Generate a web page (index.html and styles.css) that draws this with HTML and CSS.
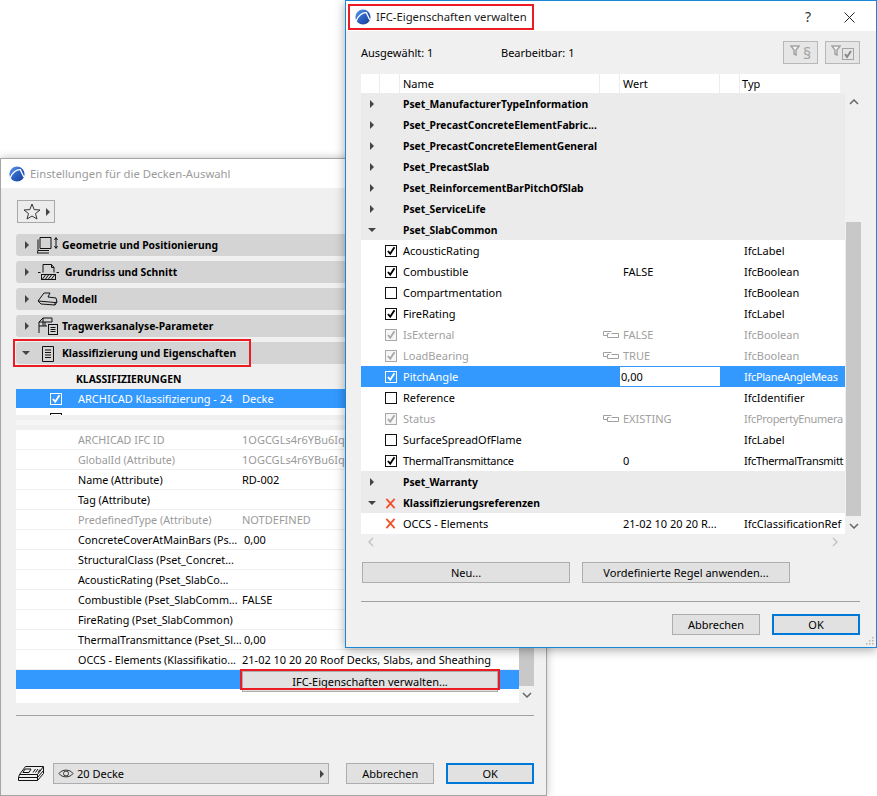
FILE: index.html
```html
<!DOCTYPE html>
<html lang="de">
<head>
<meta charset="utf-8">
<title>IFC-Eigenschaften verwalten</title>
<link rel="stylesheet" href="styles.css">
</head>
<body>
<svg class="defs" aria-hidden="true">
  <defs>
    <linearGradient id="logoFill" x1="0" y1="0" x2="1" y2="1">
      <stop offset="0" stop-color="#5f9bec"/>
      <stop offset="0.5" stop-color="#2c62c4"/>
      <stop offset="1" stop-color="#1b3c8e"/>
    </linearGradient>
  </defs>
  <symbol id="logo" viewBox="0 0 16 16">
    <circle cx="8" cy="8" r="7.6" fill="url(#logoFill)"/>
    <path d="M1.200 12C2.800 6.800 7.500 3.300 11.300 3.600L14.800 11" fill="none" stroke="#fff" stroke-width="1.300"/>
  </symbol>
  <symbol id="check" viewBox="0 0 13 13">
    <path d="M2.500 6.500L5.500 10L11 1.500" fill="none" stroke="currentColor" stroke-width="2.400"/>
  </symbol>
  <symbol id="link" viewBox="0 0 16 8">
    <path d="M8.500 0.500H0.500V4.500H4M4.500 2.500H6.500M4.500 2.500V6.500H15.500V2.500H8.500" fill="none" stroke="currentColor" stroke-width="1"/>
  </symbol>
  <symbol id="cross" viewBox="0 0 12 12">
    <path d="M1.500 1L10.500 11M10.500 1L1.500 11" fill="none" stroke="#f0512a" stroke-width="2"/>
  </symbol>
</svg>

<section class="win win-back">
  <header class="title title-back">
    <svg class="logo"><use href="#logo"/></svg>
    <span>Einstellungen für die Decken-Auswahl</span>
  </header>
  <div class="back-body">
    <button class="star-btn">
      <svg width="18" height="17" viewBox="0 0 18 17"><path d="M9 1L11.200 6.600L17 7L12.500 10.600L14 16L9 13L4 16L5.500 10.600L1 7L6.800 6.600Z" fill="none" stroke="#333" stroke-width="1"/></svg>
      <i class="tri tri-r"></i>
    </button>
    <div class="sections">
      <div class="sec"><i class="tri tri-r"></i>
        <svg class="sec-ico" width="24" height="18" viewBox="0 0 24 18"><path d="M3 1.500H14V12.500H3ZM1 3.500V14.500H12M1 14.500L0 17H12" fill="none" stroke="#111"/><path d="M19 2V12M17.500 4L19 1.500L20.500 4M17.500 10L19 12.500L20.500 10" fill="none" stroke="#111"/></svg>
        <b>Geometrie und Positionierung</b></div>
      <div class="sec"><i class="tri tri-r"></i>
        <svg class="sec-ico ico-wide" width="22" height="18" viewBox="0 0 22 18"><path d="M5 9.500V1.500H13.500L16 4.500V9.500M16 4.500H13.500V1.500M0 9.500H2.500M18.500 9.500H21" fill="none" stroke="#111"/><rect x="3.500" y="11.500" width="14" height="5" fill="none" stroke="#111"/><path d="M4.500 16L7.500 12M7.500 16L10.500 12M10.500 16L13.500 12M13.500 16L16.500 12" stroke="#111"/></svg>
        <b>Grundriss und Schnitt</b></div>
      <div class="sec"><i class="tri tri-r"></i>
        <svg class="sec-ico" width="24" height="18" viewBox="0 0 24 18"><path d="M1 11L7 3L13 3L11 7L19 8L20 12L18 15L4 14ZM1 11L18 12.500L18 15M20 12L18 12.500" fill="none" stroke="#111"/></svg>
        <b>Modell</b></div>
      <div class="sec"><i class="tri tri-r"></i>
        <svg class="sec-ico" width="24" height="18" viewBox="0 0 24 18"><path d="M2 16V5L6 1H15V5M2 5H15M6 1V9M2 9H10M8 5V9" fill="none" stroke="#111"/><rect x="11.500" y="7.500" width="9" height="10" fill="#d4d4d4" stroke="#111"/><path d="M13.500 10.500H18.500M13.500 12.500H18.500M13.500 14.500H18.500" stroke="#111"/></svg>
        <b>Tragwerksanalyse-Parameter</b></div>
      <div class="sec"><i class="tri tri-d"></i>
        <svg class="sec-ico" width="24" height="18" viewBox="0 0 24 18"><path d="M5.500 2.500H16.500V17.500H5.500Z" fill="none" stroke="#111"/><path d="M8 6H14M8 8.500H14M8 11H14M8 13.500H14" stroke="#111"/></svg>
        <b>Klassifizierung und Eigenschaften</b>
        <span class="hl hl-sec"></span></div>
    </div>
    <div class="klass-head">KLASSIFIZIERUNGEN</div>
    <div class="klass-row">
      <span class="cb cb-on cb-white klass-cb"><svg><use href="#check"/></svg></span>
      <span class="klass-name">ARCHICAD Klassifizierung - 24</span><span>Decke</span>
    </div>
    <div class="klass-rest"><span class="cb klass-cb2"></span></div>
    <div class="strip"></div>

    <div class="props">
      <div class="prop-list">
        <div class="prop dim"><span>ARCHICAD IFC ID</span><span>1OGCGLs4r6YBu6Iqr</span></div>
        <div class="prop dim"><span>GlobalId (Attribute)</span><span>1OGCGLs4r6YBu6Iqr</span></div>
        <div class="prop"><span>Name (Attribute)</span><span>RD-002</span></div>
        <div class="prop"><span>Tag (Attribute)</span><span></span></div>
        <div class="prop dim"><span>PredefinedType (Attribute)</span><span>NOTDEFINED</span></div>
        <div class="prop"><span>ConcreteCoverAtMainBars (Ps...</span><span class="shift">0,00</span></div>
        <div class="prop"><span>StructuralClass (Pset_Concret...</span><span></span></div>
        <div class="prop"><span>AcousticRating (Pset_SlabCo...</span><span></span></div>
        <div class="prop"><span>Combustible (Pset_SlabComm...</span><span>FALSE</span></div>
        <div class="prop"><span>FireRating (Pset_SlabCommon)</span><span></span></div>
        <div class="prop"><span>ThermalTransmittance (Pset_Sl...</span><span class="shift">0,00</span></div>
        <div class="prop"><span>OCCS - Elements (Klassifikatio...</span><span>21-02 10 20 20 Roof Decks, Slabs, and Sheathing</span></div>
        <div class="prop-action">
          <button class="btn btn-ifc">IFC-Eigenschaften verwalten...</button>
          <span class="hl hl-btn"></span>
        </div>
        <div class="prop-end"></div>
      </div>
      <div class="back-scroll">
        <div class="back-thumb"></div>
        <svg class="chev" width="10" height="6" viewBox="0 0 10 6"><path d="M1 1L5 5L9 1" fill="none" stroke="#666" stroke-width="1.500"/></svg>
      </div>
    </div>
    <div class="rule rule-back"></div>
    <div class="back-foot">
      <svg class="stack" width="26" height="16" viewBox="0 0 26 16"><path d="M7.500 0.500H25.500L19.500 8.500H1.500ZM1.500 8.500L0.500 11.500V14.500H19.500L25.500 7.500V1M0.500 11.500H19.500L25.500 4.500M19.500 8.500V14.500" fill="none" stroke="#111"/><path d="M7 3H13L11 6.500H5Z" fill="none" stroke="#111"/><path d="M15 6.500L17.500 3M17.500 6.500L20 3M20 6.500L22 3.500" stroke="#111"/></svg>
      <div class="combo">
        <svg width="16" height="9" viewBox="0 0 16 9"><path d="M1 4.500C4 0 12 0 15 4.500C12 9 4 9 1 4.500Z" fill="none" stroke="#333"/><circle cx="8" cy="4.500" r="2.500" fill="none" stroke="#333"/></svg>
        <span class="combo-text">20 Decke</span>
        <i class="tri tri-r"></i>
      </div>
      <button class="btn btn-foot">Abbrechen</button>
      <button class="btn btn-foot btn-ok">OK</button>
    </div>
  </div>
</section>

<section class="win win-front">
  <header class="title title-front">
    <div class="title-mark">
      <svg class="logo"><use href="#logo"/></svg>
      <span>IFC-Eigenschaften verwalten</span>
    </div>
    <span class="help">?</span>
    <svg class="close" width="11" height="11" viewBox="0 0 11 11"><path d="M0.500 0.500L10.500 10.500M10.500 0.500L0.500 10.500" stroke="#222" stroke-width="1"/></svg>
  </header>
  <div class="front-body">
    <div class="info">
      <span class="info-a">Ausgewählt: 1</span>
      <span class="info-b">Bearbeitbar: 1</span>
      <button class="tool tool-a">
        <svg class="tool-funnel" width="10" height="11" viewBox="0 0 10 11"><path d="M1 1H9L6 5V10L4 9V5Z" fill="#f6f6f6" stroke="#a4a4a4" stroke-width="1.500"/></svg>
        <span class="para">§</span>
      </button>
      <button class="tool">
        <svg class="tool-funnel" width="10" height="11" viewBox="0 0 10 11"><path d="M1 1H9L6 5V10L4 9V5Z" fill="#f6f6f6" stroke="#a4a4a4" stroke-width="1.500"/></svg>
        <svg class="tool-box" width="12" height="12" viewBox="0 0 12 12"><rect x="0.500" y="0.500" width="11" height="11" fill="none" stroke="#a4a4a4"/><path d="M3 6L5 9L9 3" fill="none" stroke="#8a8a8a" stroke-width="2"/></svg>
      </button>
    </div>

    <div class="tbl-head">
      <span></span><span></span><span class="th">Name</span><span></span><span class="th">Wert</span><span></span><span class="th">Typ</span>
    </div>
    <div class="tbl-wrap">
      <div class="tbl">
        <div class="row grp"><i class="tri tri-r"></i><span></span><b>Pset_ManufacturerTypeInformation</b></div>
        <div class="row grp"><i class="tri tri-r"></i><span></span><b>Pset_PrecastConcreteElementFabric...</b></div>
        <div class="row grp"><i class="tri tri-r"></i><span></span><b>Pset_PrecastConcreteElementGeneral</b></div>
        <div class="row grp"><i class="tri tri-r"></i><span></span><b>Pset_PrecastSlab</b></div>
        <div class="row grp"><i class="tri tri-r"></i><span></span><b>Pset_ReinforcementBarPitchOfSlab</b></div>
        <div class="row grp"><i class="tri tri-r"></i><span></span><b>Pset_ServiceLife</b></div>
        <div class="row grp"><i class="tri tri-d"></i><span></span><b>Pset_SlabCommon</b></div>

        <div class="row"><span></span><span class="cb cb-on"><svg><use href="#check"/></svg></span><span>AcousticRating</span><span></span><span></span><span></span><span class="typ">IfcLabel</span></div>
        <div class="row"><span></span><span class="cb cb-on"><svg><use href="#check"/></svg></span><span>Combustible</span><span></span><span>FALSE</span><span></span><span class="typ">IfcBoolean</span></div>
        <div class="row"><span></span><span class="cb"></span><span>Compartmentation</span><span></span><span></span><span></span><span class="typ">IfcBoolean</span></div>
        <div class="row"><span></span><span class="cb cb-on"><svg><use href="#check"/></svg></span><span>FireRating</span><span></span><span></span><span></span><span class="typ">IfcLabel</span></div>
        <div class="row off"><span></span><span class="cb cb-on"><svg><use href="#check"/></svg></span><span>IsExternal</span><svg class="lnk"><use href="#link"/></svg><span>FALSE</span><span></span><span class="typ">IfcBoolean</span></div>
        <div class="row off"><span></span><span class="cb cb-on"><svg><use href="#check"/></svg></span><span>LoadBearing</span><svg class="lnk"><use href="#link"/></svg><span>TRUE</span><span></span><span class="typ">IfcBoolean</span></div>
        <div class="row sel"><span></span><span class="cb cb-on cb-white"><svg><use href="#check"/></svg></span><span>PitchAngle</span><span></span><span class="field">0,00</span><span></span><span class="typ tight">IfcPlaneAngleMeas</span></div>
        <div class="row"><span></span><span class="cb"></span><span>Reference</span><span></span><span></span><span></span><span class="typ">IfcIdentifier</span></div>
        <div class="row off"><span></span><span class="cb cb-on"><svg><use href="#check"/></svg></span><span>Status</span><svg class="lnk"><use href="#link"/></svg><span>EXISTING</span><span></span><span class="typ tight">IfcPropertyEnumera</span></div>
        <div class="row"><span></span><span class="cb"></span><span>SurfaceSpreadOfFlame</span><span></span><span></span><span></span><span class="typ">IfcLabel</span></div>
        <div class="row"><span></span><span class="cb cb-on"><svg><use href="#check"/></svg></span><span class="tight">ThermalTransmittance</span><span></span><span>0</span><span></span><span class="typ tight">IfcThermalTransmitt</span></div>

        <div class="row grp"><i class="tri tri-r"></i><span></span><b>Pset_Warranty</b></div>
        <div class="row grp"><i class="tri tri-d"></i><svg class="x"><use href="#cross"/></svg><b>Klassifizierungsreferenzen</b></div>
        <div class="row"><span></span><svg class="x"><use href="#cross"/></svg><span>OCCS - Elements</span><span></span><span>21-02 10 20 20 R...</span><span></span><span class="typ">IfcClassificationRef</span></div>
      </div>
      <div class="vscroll">
        <svg class="chev chev-up" width="10" height="6" viewBox="0 0 10 6"><path d="M1 5L5 1L9 5" fill="none" stroke="#666" stroke-width="1.500"/></svg>
        <div class="vthumb"></div>
        <svg class="chev" width="10" height="6" viewBox="0 0 10 6"><path d="M1 1L5 5L9 1" fill="none" stroke="#666" stroke-width="1.500"/></svg>
      </div>
    </div>
    <div class="hscroll">
      <svg width="6" height="10" viewBox="0 0 6 10"><path d="M5 1L1 5L5 9" fill="none" stroke="#c4c4c4" stroke-width="1.500"/></svg>
      <svg width="6" height="10" viewBox="0 0 6 10"><path d="M1 1L5 5L1 9" fill="none" stroke="#c4c4c4" stroke-width="1.500"/></svg>
    </div>
    <div class="actions">
      <button class="btn btn-act">Neu...</button>
      <button class="btn btn-act">Vordefinierte Regel anwenden...</button>
    </div>
    <div class="rule rule-front"></div>
    <div class="front-foot">
      <button class="btn btn-foot">Abbrechen</button>
      <button class="btn btn-foot btn-ok">OK</button>
    </div>
  </div>
  <svg class="grip" width="9" height="9" viewBox="0 0 9 9"><path d="M7 1h1.500v1.500H7zM4 4h1.500v1.500H4zM7 4h1.500v1.500H7zM1 7h1.500v1.500H1zM4 7h1.500v1.500H4zM7 7h1.500v1.500H7z" fill="#b5b5b5"/></svg>
</section>
</body>
</html>
```
FILE: styles.css
```css
* { box-sizing: border-box; }
html, body { margin: 0; padding: 0; }
body {
  width: 877px;
  height: 796px;
  position: relative;
  overflow: hidden;
  background: #fff;
  font-family: "Noto Sans", "Open Sans", sans-serif;
  font-size: 11px;
  line-height: 20px;
  color: #000;
}
.defs { position: absolute; width: 0; height: 0; }
button { font: inherit; color: inherit; margin: 0; padding: 0; }
b { font-weight: 700; font-size: 10.35px; }
.tight { letter-spacing: -0.3px; }

/* windows */
.win { position: absolute; background: #f0f0f0; }
.win-back {
  left: 0; top: 158px; width: 547px; height: 638px;
  border: 1px solid #a6a6a6;
  box-shadow: 0 0 8px rgba(0,0,0,.25);
}
.win-front {
  left: 345px; top: 0; width: 532px; height: 648px;
  border: 1px solid #1a86d8;
  box-shadow: 0 2px 10px rgba(0,0,0,.35);
}
.title { display: flex; align-items: center; background: #fff; font-size: 11.3px; white-space: nowrap; }
.title-back { height: 29px; padding-left: 8px; color: #9b9b9b; gap: 5px; }
.title-front { height: 30px; padding: 2px 21px 0 2px; }
.logo { width: 16px; height: 16px; flex: none; }
.title-mark {
  display: flex; align-items: center; gap: 5px;
  width: 186px; height: 26px; padding-left: 6px;
  border: 1px solid #ec1c24; outline: 1px solid #ec1c24; outline-offset: -2px;
  color: #1a1a1a;
}
.help { margin-left: auto; margin-right: 33px; font-size: 14px; color: #333; }

/* triangles */
.tri { display: block; width: 0; height: 0; flex: none; }
.tri-r { border-style: solid; border-width: 4px 0 4px 4px; border-color: transparent transparent transparent #444; }
.tri-d { border-style: solid; border-width: 4px 4px 0 4px; border-color: #444 transparent transparent transparent; }

/* back window */
.back-body { padding: 0 12px 0 15px; }
.star-btn {
  display: flex; align-items: center; gap: 5px;
  width: 38px; height: 23px; margin: 12px 0 0 1px; padding-left: 5px;
  background: #ececec; border: 1px solid #a8a8a8;
}
.sections { display: flex; flex-direction: column; gap: 5px; margin-top: 11px; }
.sec {
  position: relative; display: flex; align-items: center;
  height: 22px; padding-left: 9px;
  background: #d4d4d4; border-radius: 3px;
}
.sec .tri-d { margin: 0 -1px 0 -3px; }
.sec-ico { margin: 0 1px 0 8px; flex: none; }
.sec .ico-wide { margin: 0 5px 0 9px; }
.hl { position: absolute; border: 2px solid #ec1c24; pointer-events: none; }
.hl-sec { left: -3px; top: -3px; width: 238px; height: 28px; }
.klass-head { height: 25px; padding: 5px 0 0 60px; font-weight: 700; font-size: 10.35px; }
.klass-row {
  display: flex; align-items: center; height: 19px;
  background: #3399ff; color: #fff;
}
.klass-name { margin-left: 16px; width: 164px; }
.klass-rest { height: 7px; background: #fff; overflow: hidden; position: relative; }
.strip { height: 5px; margin: 5px 0 5px; background: #f6f6f6; }

.props { display: flex; }
.prop-list { width: 503px; flex: none; }
.prop {
  display: grid; grid-template-columns: 164px 1fr;
  height: 20px; padding-left: 62px;
  background: #fff; border-bottom: 1px solid #efefef;
  line-height: 20px; white-space: nowrap;
}
.prop > span:first-child { font-size: 10.75px; }
.dim { color: #9a9a9a; }
.shift { padding-left: 2px; }
.prop-action {
  position: relative; height: 19px; background: #3399ff;
}
.btn-ifc { position: absolute; left: 226px; top: 1px; width: 256px; height: 17px; line-height: 15px; }
.hl-btn { left: 224px; top: -1px; width: 260px; height: 21px; }
.prop-end { height: 14px; background: #fff; }
.back-scroll {
  width: 15px; display: flex; flex-direction: column; align-items: center;
  justify-content: flex-end; padding-bottom: 5px;
}
.back-thumb { width: 15px; height: 42px; background: #c8c8c8; margin-bottom: 6px; }
.chev { display: block; flex: none; }
.rule { height: 1px; background: #a0a0a0; }
.rule-back { margin-top: 12px; }
.back-foot { display: flex; align-items: center; margin-top: 47px; height: 21px; }
.stack { flex: none; margin-left: 2px; }
.combo {
  display: flex; align-items: center; gap: 3px;
  width: 277px; height: 21px; margin-left: 9px; padding: 0 4px 0 4px;
  background: #e1e1e1; border: 1px solid #adadad;
}
.combo-text { flex: 1; }
.btn {
  background: #e1e1e1; border: 1px solid #adadad; text-align: center;
  height: 21px; line-height: 19px;
}
.btn-foot { width: 88px; }
.combo + .btn-foot { margin-left: 17px; }
.btn-foot + .btn-foot { margin-left: 12px; }
.btn-ok { border: 2px solid #0078d7; line-height: 17px; }

/* front window */
.front-body { padding: 0 16px 0 15px; }
.info { display: flex; align-items: center; height: 23px; margin-top: 10px; }
.info-a { width: 140px; }
.info-b { flex: 1; }
.tool {
  display: flex; align-items: center; justify-content: center; gap: 3px;
  width: 35px; height: 23px; background: #e6e6e6; border: 1px solid #b8b8b8;
}
.tool-a { margin-right: 7px; }
.tool-funnel { margin-top: -4px; }
.tool-box { margin-top: 2px; margin-left: -2px; }
.para { color: #a4a4a4; font-size: 16px; line-height: 18px; }
.tbl-head, .row {
  display: grid;
  grid-template-columns: 19px 20px 200px 20px 100px 20px 104px;
  align-items: center;
}
.tbl-head {
  width: 479px; height: 19px; margin-top: 10px; background: #fff;
  grid-template-columns: 19px 20px 200px 20px 100px 20px 100px;
}
.tbl-head span { height: 19px; line-height: 19px; border-right: 1px solid #ececec; }
.tbl-head span:last-child { border-right: 0; padding-left: 2px; }
.th { padding-left: 3px; }
.tbl-wrap { display: flex; }
.tbl { width: 484px; flex: none; }
.row { height: 21px; background: #fff; white-space: nowrap; line-height: 21px; }
.row > span, .row > b { min-width: 0; }
.row > :nth-child(3) { padding-left: 3px; }
.row > :nth-child(5) { padding-left: 3px; }
.typ { padding: 0 0 0 4px; }
.grp { background: #ebebeb; grid-template-columns: 19px 20px 1fr; }
.grp b { padding-top: 1px; }
.grp .tri-r { margin-left: 9px; }
.grp .tri-d { margin-left: 7px; }
.off { color: #a0a0a0; }
.sel { background: #3399ff; color: #fff; }
.sel .field {
  height: 19px; line-height: 19px; margin: 0; padding-left: 1px;
  background: #fff; color: #000;
}
.lnk { width: 16px; height: 8px; margin-left: 3px; }
.row .x { width: 11px; height: 11px; margin-left: 5px; }

.cb {
  display: block; width: 12px; height: 12px; margin-left: 5px;
  border: 1px solid #111; background: #fff; color: #000;
}
.cb svg { display: block; width: 10px; height: 10px; }
.off .cb { border-color: #a8a8a8; color: #a8a8a8; background: #f6f6f6; }
.cb-white { background: transparent; border-color: #fff; color: #fff; }
.klass-row .klass-cb { margin-left: 34px; }
.klass-rest .klass-cb2 { margin: 5px 0 0 34px; }
.klass-row .klass-name { margin-left: 16px; }

.vscroll {
  width: 15px; margin-left: 1px; height: 441px;
  display: flex; flex-direction: column; align-items: center;
}
.chev-up { margin: 6px 0 117px; }
.vthumb { width: 15px; height: 294px; background: #c8c8c8; margin-bottom: 7px; }
.hscroll {
  display: flex; justify-content: space-between; align-items: center;
  width: 484px; height: 16px; padding: 0 7px; 
}
.actions { display: flex; gap: 12px; margin-top: 12px; padding-left: 1px; }
.btn-act { width: 208px; }
.rule-front { margin-top: 18px; }
.front-foot { display: flex; justify-content: flex-end; margin-top: 12px; }
.grip { position: absolute; right: 2px; bottom: 2px; }
```
